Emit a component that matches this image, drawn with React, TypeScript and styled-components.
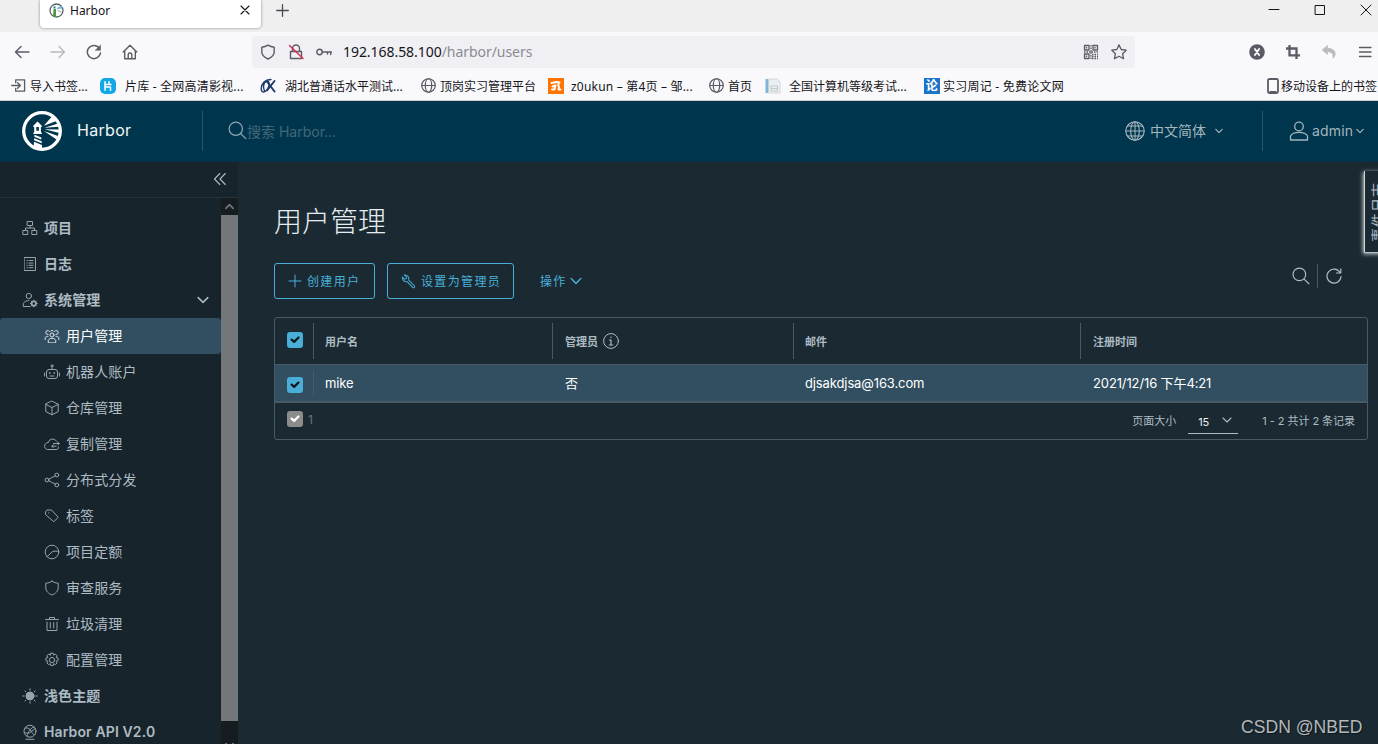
import React from "react";
import styled, { createGlobalStyle, css } from "styled-components";

const Global = createGlobalStyle`
  * { box-sizing: border-box; }
  html, body { margin: 0; padding: 0; background: #1b2a32; }
  body { font-family: Inter, "Noto Sans CJK SC", sans-serif; overflow: hidden; }
`;

const ui = `"Noto Sans", "Noto Sans CJK SC", sans-serif`;

/* ---------- icons ---------- */
const Svg = styled.svg<{ $w?: number }>`
  flex: none;
  display: block;
  fill: none;
  stroke: currentColor;
  stroke-width: ${(p) => p.$w ?? 1.1};
  stroke-linecap: round;
  stroke-linejoin: round;
`;

type IconProps = { size?: number; box?: number; w?: number; children: React.ReactNode };
const Icon = ({ size = 16, box = 16, w, children }: IconProps) => (
  <Svg width={size} height={size} viewBox={`0 0 ${box} ${box}`} $w={w}>{children}</Svg>
);

const Chevron = ({ size = 12, w = 1.3 }: { size?: number; w?: number }) => (
  <Icon size={size} box={12} w={w}><path d="M1.2 3.6 6 8.4l4.8-4.8" /></Icon>
);
const Globe = ({ size = 16, w = 1.1 }: { size?: number; w?: number }) => (
  <Icon size={size} w={w}><circle cx="8" cy="8" r="7.2" /><ellipse cx="8" cy="8" rx="3.4" ry="7.2" /><path d="M.8 8h14.4" /></Icon>
);
const Magnifier = ({ size = 20 }: { size?: number }) => (
  <Icon size={size} box={20} w={1.3}><circle cx="8.2" cy="8.2" r="7" /><path d="m13.4 13.4 5.4 5.2" /></Icon>
);

const HarborLogo = () => (
  <svg width="40" height="40" viewBox="0 0 40 40">
    <defs><clipPath id="disc"><circle cx="20" cy="20" r="18" /></clipPath></defs>
    <g clipPath="url(#disc)" fill="#fff">
      <path d="m21.800 14.800 9-10.300 5 5zM22.500 16.800l14.500-4.600v3.600zM22.500 18.300l15 .2v3.500zM22 20l14 5-1.500 3.500z" />
      <path d="M11.300 14.800 15.500 10.500l4.300 4.300v1.200h-.9v5l.9 1v1h-8.500v-1l.9-1v-5h-.9zM12.500 23.800l6.800 2.700v2L12.300 25.700zM12.200 27.200l7.500 3v2l-7.600-3zM12 30.800l8 3.200.2 5-8.700-1z" />
    </g>
    <path d="M14.300 16h2.600v3.700h-2.600z" fill="#00364d" />
    <circle cx="20" cy="20" r="18.300" fill="none" stroke="#fff" strokeWidth="3.300" />
  </svg>
);

/* ---------- browser chrome ---------- */
const Screen = styled.div`
  width: 1378px;
  height: 744px;
  position: relative;
  overflow: hidden;
  display: flex;
  flex-direction: column;
`;
const TabStrip = styled.div`
  height: 32px;
  flex: none;
  background: #efefef;
  display: flex;
  align-items: flex-start;
  padding-left: 40px;
  color: #15141a;
`;
const Tab = styled.div`
  width: 221px;
  height: 28px;
  padding: 0 11px 8px 9px;
  display: flex;
  align-items: center;
  gap: 6px;
  background: #fff;
  border-radius: 0 0 4px 4px;
  box-shadow: 0 0 3px rgba(0, 0, 0, 0.45);
  font: 12px ${ui};
`;
const Spacer = styled.div`flex: 1;`;
const NewTab = styled.div`margin: 4px 0 0 15px; color: #4a4a52;`;
const WindowButtons = styled.div`
  margin: 4px 6px 0 auto;
  display: flex;
  gap: 34px;
`;
const NavBar = styled.div`
  height: 36px;
  flex: none;
  background: #f9f9fb;
  padding: 4px 5px 0 14px;
  display: flex;
  align-items: center;
  color: #5b5b66;
`;
const NavButtons = styled.div`
  width: 238px;
  display: flex;
  gap: 20px;
`;
const Faded = styled.span`display: inline-flex; opacity: 0.4;`;
const Address = styled.div`
  width: 883px;
  height: 32px;
  padding: 0 8px;
  display: flex;
  align-items: center;
  gap: 12px;
  background: #f0f0f4;
  border-radius: 4px;
  font: 14px ${ui};
`;
const Url = styled.span`
  color: #8b8b92;
  margin: -2px 0 0 -1px;
  letter-spacing: -0.05px;
  b { font-weight: 400; color: #15141a; }
`;
const NavTools = styled.div`
  margin-left: auto;
  display: flex;
  gap: 20px;
`;
const Bookmarks = styled.div`
  height: 33px;
  flex: none;
  background: #f9f9fb;
  border-bottom: 1px solid #cfcfd3;
  padding-left: 11px;
  display: flex;
  align-items: center;
  font: 12px ${ui};
  color: #15141a;
`;
const Bookmark = styled.div<{ $width: number; $gap: number; $spacing?: number }>`
  width: ${(p) => p.$width}px;
  flex: none;
  letter-spacing: ${(p) => p.$spacing ?? 0}px;
  display: flex;
  align-items: center;
  gap: ${(p) => p.$gap}px;
  white-space: nowrap;
  height: 28px;
  padding-top: 3px;
  svg { color: #5b5b66; }
`;
const SiteIcon = styled.span<{ $bg: string; $round?: boolean }>`
  width: 16px;
  height: 16px;
  flex: none;
  border-radius: ${(p) => (p.$round ? 5 : 0)}px;
  background: ${(p) => p.$bg};
  color: #fff;
  display: flex;
  align-items: center;
  justify-content: center;
  font: 700 12px/16px ${ui};
`;

/* ---------- application header ---------- */
const Header = styled.header`
  height: 61px;
  flex: none;
  background: #00364d;
  display: flex;
  align-items: center;
  color: #a3b5bd;
  font-size: 14px;
  padding-left: 22px;
  border-bottom: 1px solid #0b3244;
`;
const Brand = styled.div`
  width: 180px;
  display: flex;
  align-items: center;
  gap: 15px;
  color: #f2f6f7;
  font-size: 16px;
  letter-spacing: 0.3px;
  span { margin-top: -2px; }
`;
const Rule = styled.div`
  width: 1px;
  height: 40px;
  background: #29566a;
`;
const SearchBox = styled.div`
  margin-left: 25px;
  display: flex;
  align-items: center;
  color: #8fa6b0;
  svg { margin-top: -1px; }
  span { color: #41687a; }
`;
const Language = styled.div`
  margin-left: auto;
  width: 137px;
  display: flex;
  align-items: center;
  svg:last-child { margin-left: 9px; }
  span { margin: -2px 0 0 5px; }
`;
const Account = styled.div`
  width: 115px;
  padding-left: 26px;
  display: flex;
  align-items: center;
  gap: 3px;
  letter-spacing: 0.15px;
  span { margin-top: -2px; }
`;

/* ---------- sidebar ---------- */
const Body = styled.div`
  flex: 1;
  min-height: 0;
  display: flex;
`;
const Sidebar = styled.aside`
  width: 238px;
  background: #17242b;
  color: #adbbc4;
  display: flex;
  flex-direction: column;
`;
const Collapse = styled.div`
  height: 36px;
  flex: none;
  border-bottom: 1px solid #25343c;
  display: flex;
  justify-content: flex-end;
  align-items: center;
  padding: 0 11px 1px 0;
`;
const NavArea = styled.div`
  flex: 1;
  min-height: 0;
  display: flex;
`;
const NavList = styled.nav`
  width: 221px;
  padding-top: 12px;
  overflow: hidden;
`;
const NavItem = styled.div<{ $child?: boolean; $active?: boolean }>`
  height: 36px;
  display: flex;
  align-items: center;
  gap: 6px;
  padding: 0 12px 0 22px;
  font-size: 14px;
  font-weight: 600;
  white-space: nowrap;
  span { margin-top: -2px; letter-spacing: 0.12px; }
  svg:first-child { opacity: 0.85; }
  svg:nth-child(3) { margin-left: auto; }
  ${(p) => p.$child && css`padding-left: 44px; font-weight: 400;`}
  ${(p) => p.$active && css`background: #324f61; color: #fff; border-radius: 3px;`}
`;
const ScrollBar = styled.div`
  width: 17px;
  background: #171c21;
  display: flex;
  flex-direction: column;
  align-items: center;
  color: #6d7377;
`;
const ScrollArrow = styled.div<{ $down?: boolean }>`
  height: 17px;
  padding-top: ${(p) => (p.$down ? 20 : 4)}px;
`;
const Thumb = styled.div`width: 17px; height: 506px; flex: none; background: #73777a;`;

/* ---------- main area ---------- */
const Main = styled.main`
  flex: 1;
  background: #1b2a32;
  padding: 36px 10px 0 36px;
  display: flex;
  flex-direction: column;
`;
const Title = styled.h1`
  margin: 0 0 17px;
  height: 48px;
  font: 300 28px/48px Inter, "Noto Sans CJK SC", sans-serif;
  color: #e6edf0;
`;
const Actions = styled.div`
  height: 36px;
  display: flex;
  align-items: center;
  margin-bottom: 18px;
`;
const Button = styled.button<{ $width: number; $flat?: boolean }>`
  width: ${(p) => p.$width}px;
  height: 36px;
  margin: 0 12px 0 0;
  padding: 0 0 0 13px;
  display: flex;
  align-items: center;
  gap: ${(p) => (p.$flat ? 3 : 5)}px;
  background: transparent;
  border: 1px solid ${(p) => (p.$flat ? "transparent" : "#49afd9")};
  border-radius: 3px;
  color: #49afd9;
  font: 12px Inter, "Noto Sans CJK SC", sans-serif;
  letter-spacing: 1.35px;
  white-space: nowrap;
  span { margin-top: -1px; }
`;
const TableTools = styled.div`
  margin: -11px 25px 0 auto;
  display: flex;
  align-items: center;
  gap: 7px;
  color: #adbbc4;
`;
const ToolRule = styled.div`width: 1px; height: 24px; background: #485969;`;
const Grid = styled.div`
  height: 123px;
  border: 1px solid #495a67;
  border-radius: 3px;
  color: #adbbc4;
`;
const Row = styled.div<{ $selected?: boolean }>`
  display: grid;
  grid-template-columns: 38px 239px 241px 287px 1fr;
  align-items: center;
  height: 47px;
  font-size: 11px;
  font-weight: 600;
  border-bottom: 1px solid #495a67;
  ${(p) => p.$selected && css`
    height: 38px;
    background: #324f61;
    border-bottom: 2px solid #495a67;
    color: #fff;
    font-size: 13px;
    font-weight: 400;
    letter-spacing: -0.12px;
  `}
`;
const Cell = styled.div<{ $rule?: boolean; $h?: number; $inset?: number }>`
  height: ${(p) => p.$h ?? 36}px;
  padding: 0 0 1px ${(p) => p.$inset ?? 11}px;
  border-left: 1px solid ${(p) => (p.$rule ? "#495a67" : "transparent")};
  display: flex;
  align-items: center;
  gap: 5px;
  white-space: nowrap;
`;
const CheckCell = styled.div<{ $shift: number }>`
  padding-left: 12px;
  margin-top: ${(p) => p.$shift}px;
`;
const Check = styled.div<{ $muted?: boolean }>`
  width: 16px;
  height: 16px;
  border-radius: 3px;
  background: ${(p) => (p.$muted ? "#8c8c8c" : "#49afd9")};
  color: ${(p) => (p.$muted ? "#fff" : "#10181c")};
`;
const Footer = styled.div`
  height: 35px;
  padding: 0 12px;
  display: flex;
  align-items: center;
  font-size: 11px;
`;
const FootText = styled.span`margin-top: -2px; letter-spacing: -0.04px;`;
const Count = styled.span`margin: -2px 0 0 5px; font-size: 12px; color: #66757f;`;
const CheckWrap = styled.div`margin-top: -3px;`;
const PageSize = styled.div`
  width: 50px;
  height: 24px;
  margin: 3px 24px 0 12px;
  padding: 0 6px 0 10px;
  display: flex;
  align-items: center;
  justify-content: space-between;
  border-bottom: 1px solid #adbbc4;
  color: #e9eff2;
  svg { color: #adbbc4; margin-top: -3px; }
`;
const EventTab = styled.div`
  position: absolute;
  left: 1364px;
  top: 171px;
  width: 40px;
  height: 82px;
  padding: 11px 0 0 5px;
  background: #1b2a32;
  border-left: 1px solid #d4d7d9;
  border-bottom: 1px solid #b9bec1;
  box-shadow: -1px 1px 4px rgba(255, 255, 255, 0.75);
  color: #adbbc4;
  font-size: 14px;
  line-height: 16px;
  span {
    display: block;
    width: 16px;
    writing-mode: vertical-rl;
    text-orientation: sideways;
    transform: rotate(180deg);
    letter-spacing: 1px;
  }
`;
const Watermark = styled.div`
  position: absolute;
  left: 1241px;
  top: 716px;
  font: 17.600px/22px "Liberation Sans", sans-serif;
  color: #b3b8bb;
  white-space: nowrap;
  text-shadow: 1px 1px 1px rgba(0, 0, 0, 0.5);
`;

const Tick = ({ muted }: { muted?: boolean }) => (
  <Check $muted={muted}><Icon w={2.2}><path d="m4.600 7.600 2.500 2.300 4.400-4.400" /></Icon></Check>
);

const glyphs: Record<string, React.ReactNode> = {
  projects: <><path d="M5.500 1.500h5v4h-5zM1.200 10.500h4.600v4H1.200zM10.200 10.500h4.600v4h-4.600zM8 5.500v2.500M3.500 10.500V8h9v2.500" /></>,
  logs: <><path d="M2.500 1.500h11v13h-11z" /><path d="M5 4.500h.4M7 4.500h4M5 7h.4M7 7h4M5 9.300h.4M7 9.300h4M5 11.700h.4M7 11.700h4" /></>,
  admin: <><circle cx="6.800" cy="4" r="2.700" /><path d="M8 14.500H1.300v-3c1-2 3-3 5.500-2.900" /><circle cx="11.800" cy="11.500" r="2.200" strokeWidth="1.800" /><path d="M11.800 8v1M11.800 14v1M8.300 11.500h1M14.300 11.500h1M9.300 9l.7.7M13.600 13.300l.7.7M14.300 9l-.7.7M10 13.300l-.7.7" /></>,
  users: <><circle cx="8" cy="7" r="2" /><path d="M4.300 14.500v-2.200C5 10.900 6.300 10.300 8 10.300s3 .6 3.700 2v2.200zM4 6.500a2 2 0 1 1 1.500-3M12 6.500a2 2 0 1 0-1.500-3M1.200 11.500V9.500c.5-.8 1.600-1.200 2.800-1.200M14.800 11.500V9.500c-.5-.8-1.600-1.200-2.800-1.200M6.800 3a1.500 1.500 0 0 1 2.400 0" /></>,
  robot: <><rect x="2.500" y="5.500" width="11" height="9" rx="2.500" /><path d="M8 5.500V3M.6 9v3M15.400 9v3M6 12h4" /><circle cx="8" cy="1.800" r="1" /><path d="M5.500 9h.5M10 9h.5" strokeWidth="1.600" /></>,
  cube: <path d="m8 1.200 6.200 3v7.400L8 14.800l-6.200-3.200V4.200zM1.800 4.400 8 7.500l6.200-3.100M8 7.500v7.300" />,
  cloud: <><path d="M12.600 5.200A4.500 4.500 0 0 0 4.300 6.500C2 6.700.6 8 .6 10.200c0 2 1.400 3.300 3.200 3.300h8.400c1.500 0 2.500-1 2.300-2.500" /><path d="M9.500 7.500h5.700M13.700 6l1.500 1.500L13.700 9M12 10.200H7.800M9.200 8.800 7.800 10.200l1.400 1.400" /></>,
  share: <><circle cx="3" cy="8" r="1.900" /><circle cx="12.800" cy="3" r="1.900" /><circle cx="12.800" cy="13" r="1.900" /><path d="m4.800 7.200 6.300-3.300M4.800 8.800l6.300 3.300" /></>,
  tag: <><path d="M1.800 3.500 3 2h4.500l6.700 7.200-4.300 4.600L1.800 6.800z" /><path d="M4.600 4.900h.2" /></>,
  quota: <><circle cx="8" cy="8" r="6.800" /><path d="M14.500 7.200H9L3 12.700" /></>,
  shield: <path d="M8 1.200c2 1.300 4 1.900 6.200 2v4.600c0 3.300-2.500 5.700-6.200 7.200-3.700-1.500-6.200-3.900-6.200-7.200V3.200C4 3.100 6 2.500 8 1.200z" />,
  trash: <path d="M1.500 3.500h13M5.500 3.500v-2h5v2M3 6v8.500h10V6M6.300 6.500v5.500M9.700 6.500v5.500" />,
  gear: <><circle cx="8" cy="8" r="2.600" /><path d="m6.800 1.200h2.400l.5 1.900 1.700-1 1.700 1.700-1 1.700 2 .6v2.500l-2 .6 1 1.700-1.700 1.700-1.700-1-.5 2H6.800l-.5-2-1.700 1-1.700-1.700 1-1.700-2-.6V6.100l2-.6-1-1.700 1.700-1.700 1.700 1z" /></>,
  sun: <><circle cx="8" cy="8" r="4" fill="currentColor" /><path d="M8 .8v1.400M8 13.800v1.400M.8 8h1.400M13.800 8h1.400M2.900 2.900l.9.9M12.200 12.200l.9.9M13.100 2.900l-.9.9M3.800 12.200l-.9.9" /></>,
  api: <><circle cx="8" cy="7.200" r="6" /><path d="M3 4c3-.5 5 .5 6.500 3.500S12 11 13 10.500M12 2.800C9 4 6.500 7 5 12M2.200 8.500C4 9.500 7 9.600 9.500 7.500s2.700-2.500 4-2.800M4 15.300h8" /></>,
};

const nav: { icon: string; label: string; child?: boolean; active?: boolean; open?: boolean }[] = [
  { icon: "projects", label: "项目" },
  { icon: "logs", label: "日志" },
  { icon: "admin", label: "系统管理", open: true },
  { icon: "users", label: "用户管理", child: true, active: true },
  { icon: "robot", label: "机器人账户", child: true },
  { icon: "cube", label: "仓库管理", child: true },
  { icon: "cloud", label: "复制管理", child: true },
  { icon: "share", label: "分布式分发", child: true },
  { icon: "tag", label: "标签", child: true },
  { icon: "quota", label: "项目定额", child: true },
  { icon: "shield", label: "审查服务", child: true },
  { icon: "trash", label: "垃圾清理", child: true },
  { icon: "gear", label: "配置管理", child: true },
  { icon: "sun", label: "浅色主题" },
  { icon: "api", label: "Harbor API V2.0" },
];

const Browser = () => (
  <>
    <TabStrip>
      <Tab>
        <svg width="15" height="15" viewBox="0 0 15 15">
          <circle cx="7.500" cy="7.500" r="6.500" fill="#fff" stroke="#57636b" strokeWidth="1.300" />
          <path d="M4.500 6h2.500v8H4z" fill="#4f9a3a" /><path d="M4.500 3.500h2v2h-2z" fill="#37718c" />
          <path d="m8 5 4.500-2.500 1 3L8 6z" fill="#6fb5e0" /><path d="m8.500 7.500 4 1.500" stroke="#9aa5ab" />
        </svg>
        Harbor
        <Spacer />
        <Icon size={10} box={10} w={1.1}><path d="m1 1 8 8M9 1 1 9" /></Icon>
      </Tab>
      <NewTab><Icon size={13} box={13} w={1.3}><path d="M6.500.7v11.600M.7 6.500h11.600" /></Icon></NewTab>
      <WindowButtons>
        <Icon size={12} box={12} w={1}><path d="M1 5.500h10" /></Icon>
        <Icon size={12} box={12} w={1}><path d="M1.500 1.500h9v9h-9z" /></Icon>
        <Icon size={12} box={12} w={1}><path d="m1 1 10 10M11 1 1 11" /></Icon>
      </WindowButtons>
    </TabStrip>
    <NavBar>
      <NavButtons>
        <Icon w={1.400}><path d="M15 8H1.500M7 2.500 1.500 8 7 13.500" /></Icon>
        <Faded><Icon w={1.400}><path d="M1 8h13.500M9 2.500 14.500 8 9 13.500" /></Icon></Faded>
        <Icon w={1.500}><path d="M12.800 3.500A6.600 6.600 0 1 0 14.500 9" /><path d="M14.500 1.300v5h-5z" fill="currentColor" strokeWidth=".5" /></Icon>
        <Icon w={1.400}><path d="M1.200 8 8 1.300 14.800 8M2.700 6.800v8h10.600v-8M6.200 14.500v-4c0-1 .6-1.500 1.800-1.500s1.800.5 1.800 1.500v4" /></Icon>
      </NavButtons>
      <Address>
        <Icon w={1.400}>{glyphs.shield}</Icon>
        <Icon w={1.400}><path d="M4.500 7V4.500a3.500 3.500 0 0 1 7 0V7M2.500 7.500h11v7h-11z" /><path d="m1.500 1.500 13.500 13" stroke="#e22850" /></Icon>
        <Icon w={1.400}><circle cx="3.500" cy="8" r="2.700" /><path d="M6.300 8h9.200M11.500 8v2M14.700 8v2.500" /></Icon>
        <Url><b>192.168.58.100</b>/harbor/users</Url>
        <Spacer />
        <Icon w={1.300}>
          <path d="M1.500 1.500h4.500v4.500H1.500zM10 1.500h4.500v4.500H10zM1.500 10h4.500v4.500H1.500z" />
          <path strokeLinecap="butt" strokeDasharray="1.500 1" d="M8 1v14M3.500 3v1.500M12 3v1.500M3.500 11.500V13M1 8h14M9 10.500h6M9 12.500h6M9 14.500h6" />
        </Icon>
        <Icon w={1.300}><path d="m8 .9 2.200 4.600 5 .7-3.600 3.500.9 5L8 12.300l-4.500 2.400.9-5L.8 6.200l5-.7z" /></Icon>
      </Address>
      <NavTools>
        <Icon><circle cx="8" cy="8" r="7.800" fill="#5b5b66" stroke="none" /><path d="m5.900 5 4.200 6M10.100 5l-4.200 6" stroke="#fff" strokeWidth="1.800" /></Icon>
        <Icon w={2.300}><path strokeLinecap="butt" strokeLinejoin="miter" d="M4.500 1v10.300H15M1 4.500h10.500V15" /></Icon>
        <Faded><Icon><path d="M6.500 1.500 1.200 6l5.300 4.500V7.800c4 0 6 1.700 5.500 6.500 4.200-4 2.500-10-5.500-10z" fill="currentColor" strokeWidth=".6" /></Icon></Faded>
        <Icon w={1.300}><path d="M2.500 3.500h11.500M2.500 8h11.500M2.500 12.500h11.500" /></Icon>
      </NavTools>
    </NavBar>
    <Bookmarks>
      <Bookmark $width={89} $gap={4}><Icon size={15} w={1.400}><path d="M5 5V2h9.500v12H5v-3M.8 8h9M7 5l3 3-3 3" /></Icon>导入书签...</Bookmark>
      <Bookmark $width={160} $gap={9} $spacing={0.2}><SiteIcon $bg="#12a8e8" $round><Icon size={10} box={10} w={1.500}><path d="M2 .8v8.400M2 3.500h6M6 .8v2.500M2 6h5.500v3.200" stroke="#fff" /></Icon></SiteIcon>片库 - 全网高清影视...</Bookmark>
      <Bookmark $width={161} $gap={9}>
        <Icon><g stroke="#203a6c"><path d="M11 1.500C5 1.500 1.200 6 1.200 10.500S5 15 7.500 11 10 3 6.500 3.500 3 10 4.500 13" strokeWidth="1.400" /><path d="m7 3.500 7.500 10M14.500 3 7 12.500" strokeWidth="2" /></g></Icon>湖北普通话水平测试...
      </Bookmark>
      <Bookmark $width={127} $gap={4}><Globe size={15} w={1.300} />顶岗实习管理平台</Bookmark>
      <Bookmark $width={161} $gap={7} $spacing={0.2}><SiteIcon $bg="#ff7300"><Icon><path d="m3.500 5 5-1 3 .5-1.500 2.500 1 1.500-.5 3h2M4.500 8.500l3-1-1 4H4" stroke="#fff" strokeWidth="1.900" /></Icon></SiteIcon>z0ukun – 第4页 – 邹...</Bookmark>
      <Bookmark $width={56} $gap={4}><Globe size={15} w={1.300} />首页</Bookmark>
      <Bookmark $width={159} $gap={8}>
        <Icon><path d="M.5 1h3v14h-3z" fill="#7fb3d8" stroke="none" /><path d="M4 1h8l3 3v11H4z" fill="#eceff1" stroke="#c5cbd0" strokeWidth=".7" /><path d="M6.500 8h6v5h-6zM6.500 10.500h6" stroke="#b9c0c6" strokeWidth=".8" /></Icon>全国计算机等级考试...
      </Bookmark>
      <Bookmark $width={343} $gap={3} $spacing={0.25}><SiteIcon $bg="#1a74c8">论</SiteIcon>实习周记 - 免费论文网</Bookmark>
      <Bookmark $width={120} $gap={2}><Svg width="12" height="16" viewBox="0 0 12 16" $w={1.800}><rect x="1" y="1" width="10" height="14" rx="1.500" /><path d="M3 13.500h6" strokeWidth="1" /></Svg>移动设备上的书签</Bookmark>
    </Bookmarks>
  </>
);

export default function App() {
  return (
    <Screen>
      <Global />
      <Browser />
      <Header>
        <Brand><HarborLogo /><span>Harbor</span></Brand>
        <Rule />
        <SearchBox><Magnifier size={19} /><span>搜索 Harbor...</span></SearchBox>
        <Language>
          <Icon size={20} box={20} w={1.100}><circle cx="10" cy="10" r="9.200" /><ellipse cx="10" cy="10" rx="4.300" ry="9.200" /><path d="M10 .8v18.400M.8 10h18.400M2.500 5h15M2.500 15h15" /></Icon>
          <span>中文简体</span>
          <Chevron size={8} w={1.800} />
        </Language>
        <Rule />
        <Account>
          <Icon size={20} box={20} w={1.300}><circle cx="10" cy="5.500" r="4.300" /><path d="M1.500 19v-4c1.500-2.600 4.500-3.600 8.500-3.600s7 1 8.500 3.600v4z" /></Icon>
          <span>admin</span>
          <Chevron size={8} w={1.800} />
        </Account>
      </Header>
      <Body>
        <Sidebar>
          <Collapse><Icon size={14} box={14} w={1.100}><path d="M6.800 1.500 1.500 7l5.300 5.500M12.300 1.500 7 7l5.300 5.500" /></Icon></Collapse>
          <NavArea>
            <NavList>
              {nav.map((n) => (
                <NavItem key={n.label} $child={n.child} $active={n.active}>
                  <Icon w={1}>{glyphs[n.icon]}</Icon>
                  <span>{n.label}</span>
                  {n.open && <Chevron w={1.500} />}
                </NavItem>
              ))}
            </NavList>
            <ScrollBar>
              <ScrollArrow><Icon size={9} box={10} w={2}><path d="m1 7 4-4 4 4" /></Icon></ScrollArrow>
              <Thumb />
              <ScrollArrow $down><Icon size={9} box={10} w={2}><path d="m1 3 4 4 4-4" /></Icon></ScrollArrow>
            </ScrollBar>
          </NavArea>
        </Sidebar>
        <Main>
          <Title>用户管理</Title>
          <Actions>
            <Button $width={101}><Icon size={14} box={14} w={1}><path d="M7 1v12M1 7h12" /></Icon><span>创建用户</span></Button>
            <Button $width={127}>
              <Icon size={15} w={1.100}><path d="m8.200 6.500 6.200 6.300c.8 1-.8 2.500-1.800 1.700L6.500 8.200C4 8.800 1 6.500 1.400 3.200l2.200 2.200 2-.3.200-1.900L3.600 1.100c3-.4 5.600 2.600 4.600 5.400z" /></Icon>
              <span>设置为管理员</span>
            </Button>
            <Button $width={80} $flat><span>操作</span><Chevron w={1.400} /></Button>
            <TableTools>
              <Magnifier size={18} />
              <ToolRule />
              <Icon size={18} box={18} w={1.200}><path d="M15 5.500A7 7 0 1 0 16 9.500M11.500 6h4.300V1.800" /></Icon>
            </TableTools>
          </Actions>
          <Grid>
            <Row>
              <CheckCell $shift={-2}><Tick /></CheckCell>
              <Cell $rule>用户名</Cell>
              <Cell $rule $inset={12}>管理员<Icon w={1}><circle cx="8" cy="8" r="7.400" /><path d="M8 4v.4M6.500 7H8v5M6.300 12h3.400" strokeWidth="1.200" /></Icon></Cell>
              <Cell $rule>邮件</Cell>
              <Cell $rule $inset={12}>注册时间</Cell>
            </Row>
            <Row $selected>
              <CheckCell $shift={3}><Tick /></CheckCell>
              <Cell $rule $h={26}>mike</Cell>
              <Cell $h={26} $inset={12}>否</Cell>
              <Cell $h={26}>djsakdjsa@163.com</Cell>
              <Cell $h={26} $inset={12}>2021/12/16 下午4:21</Cell>
            </Row>
            <Footer>
              <CheckWrap><Tick muted /></CheckWrap>
              <Count>1</Count>
              <Spacer />
              <FootText>页面大小</FootText>
              <PageSize>15<Chevron size={10} /></PageSize>
              <FootText>1 - 2 共计 2 条记录</FootText>
            </Footer>
          </Grid>
        </Main>
      </Body>
      <EventTab><span>事件日志</span></EventTab>
      <Watermark>CSDN @NBED</Watermark>
    </Screen>
  );
}
